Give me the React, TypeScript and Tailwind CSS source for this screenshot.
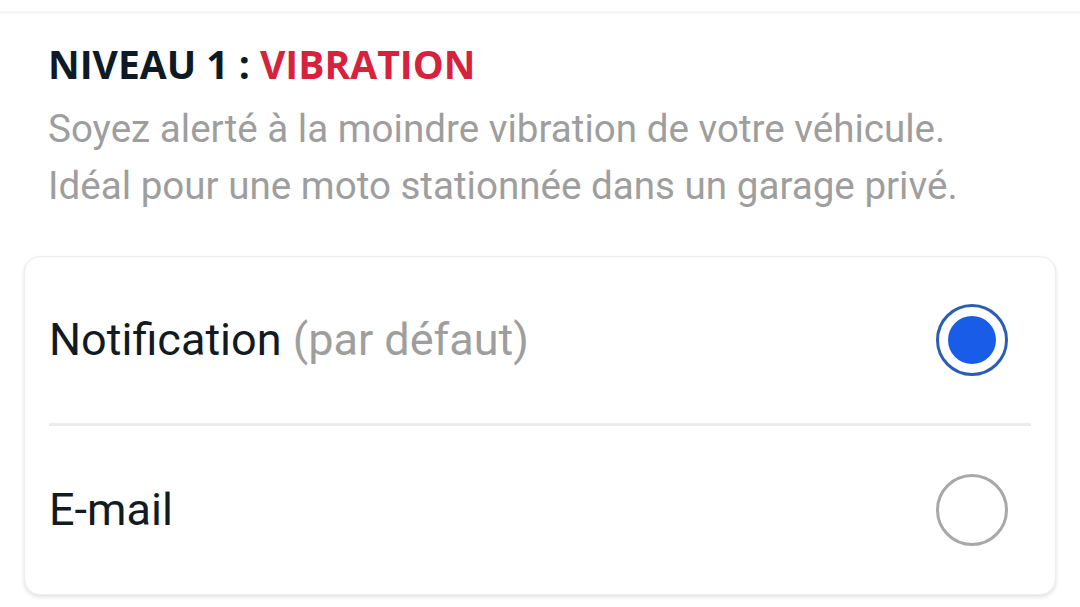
export default function App() {
  return (
    <div className="w-[1080px] h-[607px] bg-white overflow-hidden font-['Roboto',sans-serif]">
      <div className="h-[14px] border-b-[3px] border-[#f6f6f6]" />
      <div className="px-[48px] pt-[26px]">
        <h1 className="font-['Open_Sans',sans-serif] font-bold text-[39px] leading-[48px] text-[#0e1a26]">
          NIVEAU 1 : <span className="text-[#d7213d]">VIBRATION</span>
        </h1>
        <p className="mt-[12px] text-[38.6px] leading-[57px] text-[#9e9e9e]">
          Soyez alerté à la moindre vibration de votre véhicule.
          <br />
          Idéal pour une moto stationnée dans un garage privé.
        </p>
      </div>
      <div className="mx-[24px] mt-[42px] rounded-[16px] bg-white border border-[#ededed] shadow-[0_2px_4px_rgba(0,0,0,0.12)] px-[24px]">
        <div className="flex items-center justify-between h-[169px] border-b-[3px] border-[#ececec]">
          <span className="text-[45px] text-[#121a22]">
            Notification <span className="text-[#9e9e9e]">(par défaut)</span>
          </span>
          <div className="mr-[23px] w-[72px] h-[72px] rounded-full border-[3px] border-[#2a5db3] flex items-center justify-center">
            <div className="w-[48px] h-[48px] rounded-full bg-[#195ce8]" />
          </div>
        </div>
        <div className="flex items-center justify-between h-[168px]">
          <span className="text-[45px] text-[#121a22]">E-mail</span>
          <div className="mr-[23px] w-[72px] h-[72px] rounded-full border-[3px] border-[#a8a8a8]" />
        </div>
      </div>
    </div>
  );
}
